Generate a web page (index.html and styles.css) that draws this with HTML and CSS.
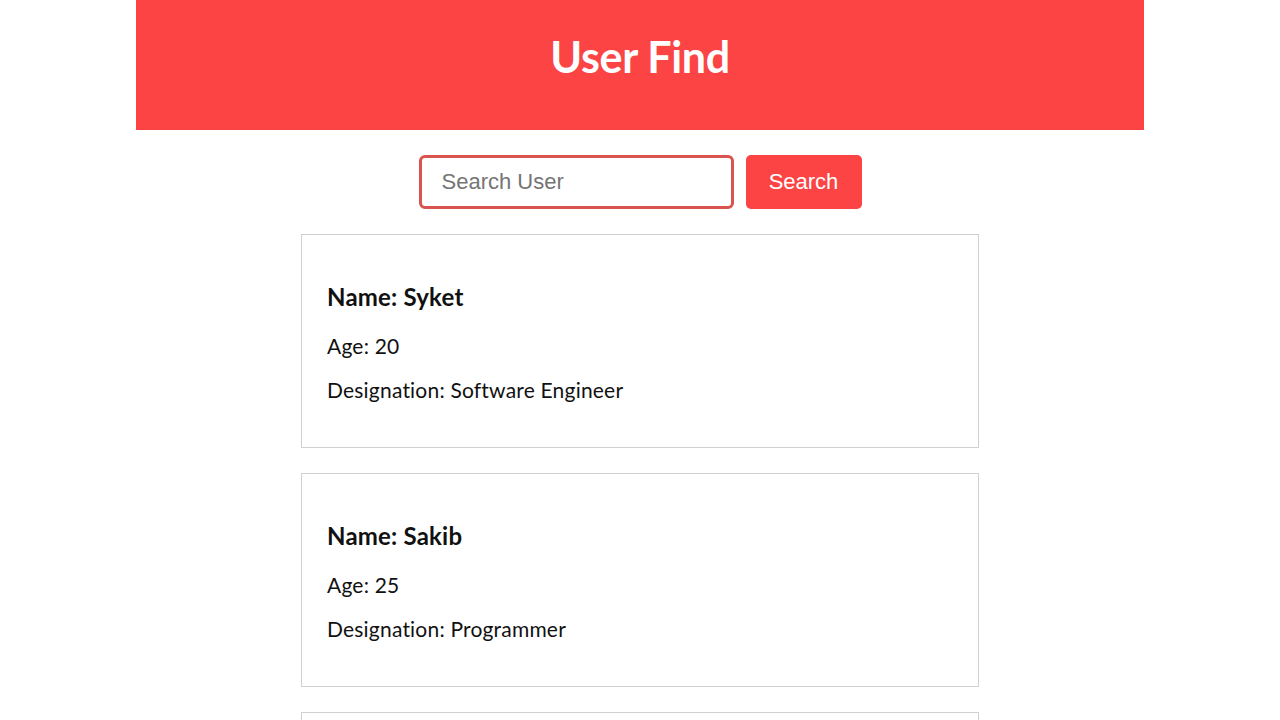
FILE: index.html
```html
<!DOCTYPE html>
<html lang="en">
<head>
    <meta charset="UTF-8">
    <meta name="viewport" content="width=device-width, initial-scale=1.0">
    <title>User Find</title>
    <link rel="stylesheet" href="styles.css">
</head>
<body>
    <div class="container">
        <!-- Header -->
        <header class="header">
            <h1>User Find</h1>
        </header>

        <!-- Search bar -->
        <div class="search-box">
            <input type="text" class="search-input" placeholder="Search User">
            <button class="search-btn">Search</button>
        </div>

        <!-- User list -->
        <div class="users">
            <div class="user-card">
                <h3>Name: Syket</h3>
                <p>Age: 20</p>
                <p>Designation: Software Engineer</p>
            </div>
            <div class="user-card">
                <h3>Name: Sakib</h3>
                <p>Age: 25</p>
                <p>Designation: Programmer</p>
            </div>
            <div class="user-card">
                <h3>Name: Rahim</h3>
                <p>Age: 30</p>
                <p>Designation: Designer</p>
            </div>
        </div>
    </div>
</body>
</html>
```

FILE: styles.css
```css
/* Page base */
body {
    margin: 0;
    font-family: Lato, 'Open Sans', sans-serif;
    background: #fff;
    color: #111;
}

.container {
    width: 1008px;
    margin: 0 auto;
}

/* Header */
.header {
    background-color: #fc4445;
    height: 130px;
    box-sizing: border-box;
    padding-bottom: 18px;
    display: flex;
    align-items: center;
    justify-content: center;
}

.header h1 {
    margin: 0;
    color: #fff;
    font-size: 43px;
    font-weight: 700;
    letter-spacing: -0.3px;
}

/* Search */
.search-box {
    display: flex;
    justify-content: center;
    gap: 12px;
    margin-top: 25px;
}

.search-input {
    width: 315px;
    height: 54px;
    box-sizing: border-box;
    border: 3px solid #d9534f;
    border-radius: 6px;
    padding: 0 20px;
    font-family: 'Liberation Sans', Arial, sans-serif;
    font-size: 22px;
    outline: none;
}

.search-input::placeholder {
    color: #757575;
}

.search-btn {
    width: 116px;
    height: 54px;
    background-color: #fc4445;
    color: #fff;
    border: none;
    border-radius: 5px;
    font-family: 'Liberation Sans', Arial, sans-serif;
    font-size: 22px;
    cursor: pointer;
}

/* User cards */
.users {
    display: flex;
    flex-direction: column;
    align-items: center;
    gap: 25px;
    margin-top: 25px;
}

.user-card {
    width: 678px;
    box-sizing: border-box;
    border: 1px solid #d0d0d0;
    padding: 26px 25px;
}

.user-card h3 {
    margin: 23px 0 24px;
    font-size: 24px;
    line-height: 26px;
    font-weight: 700;
    letter-spacing: 0.2px;
}

.user-card p {
    margin: 0 0 20px;
    font-size: 21px;
    line-height: 24px;
    letter-spacing: 0.2px;
}

.user-card p:last-child {
    margin-bottom: 19px;
}
```
